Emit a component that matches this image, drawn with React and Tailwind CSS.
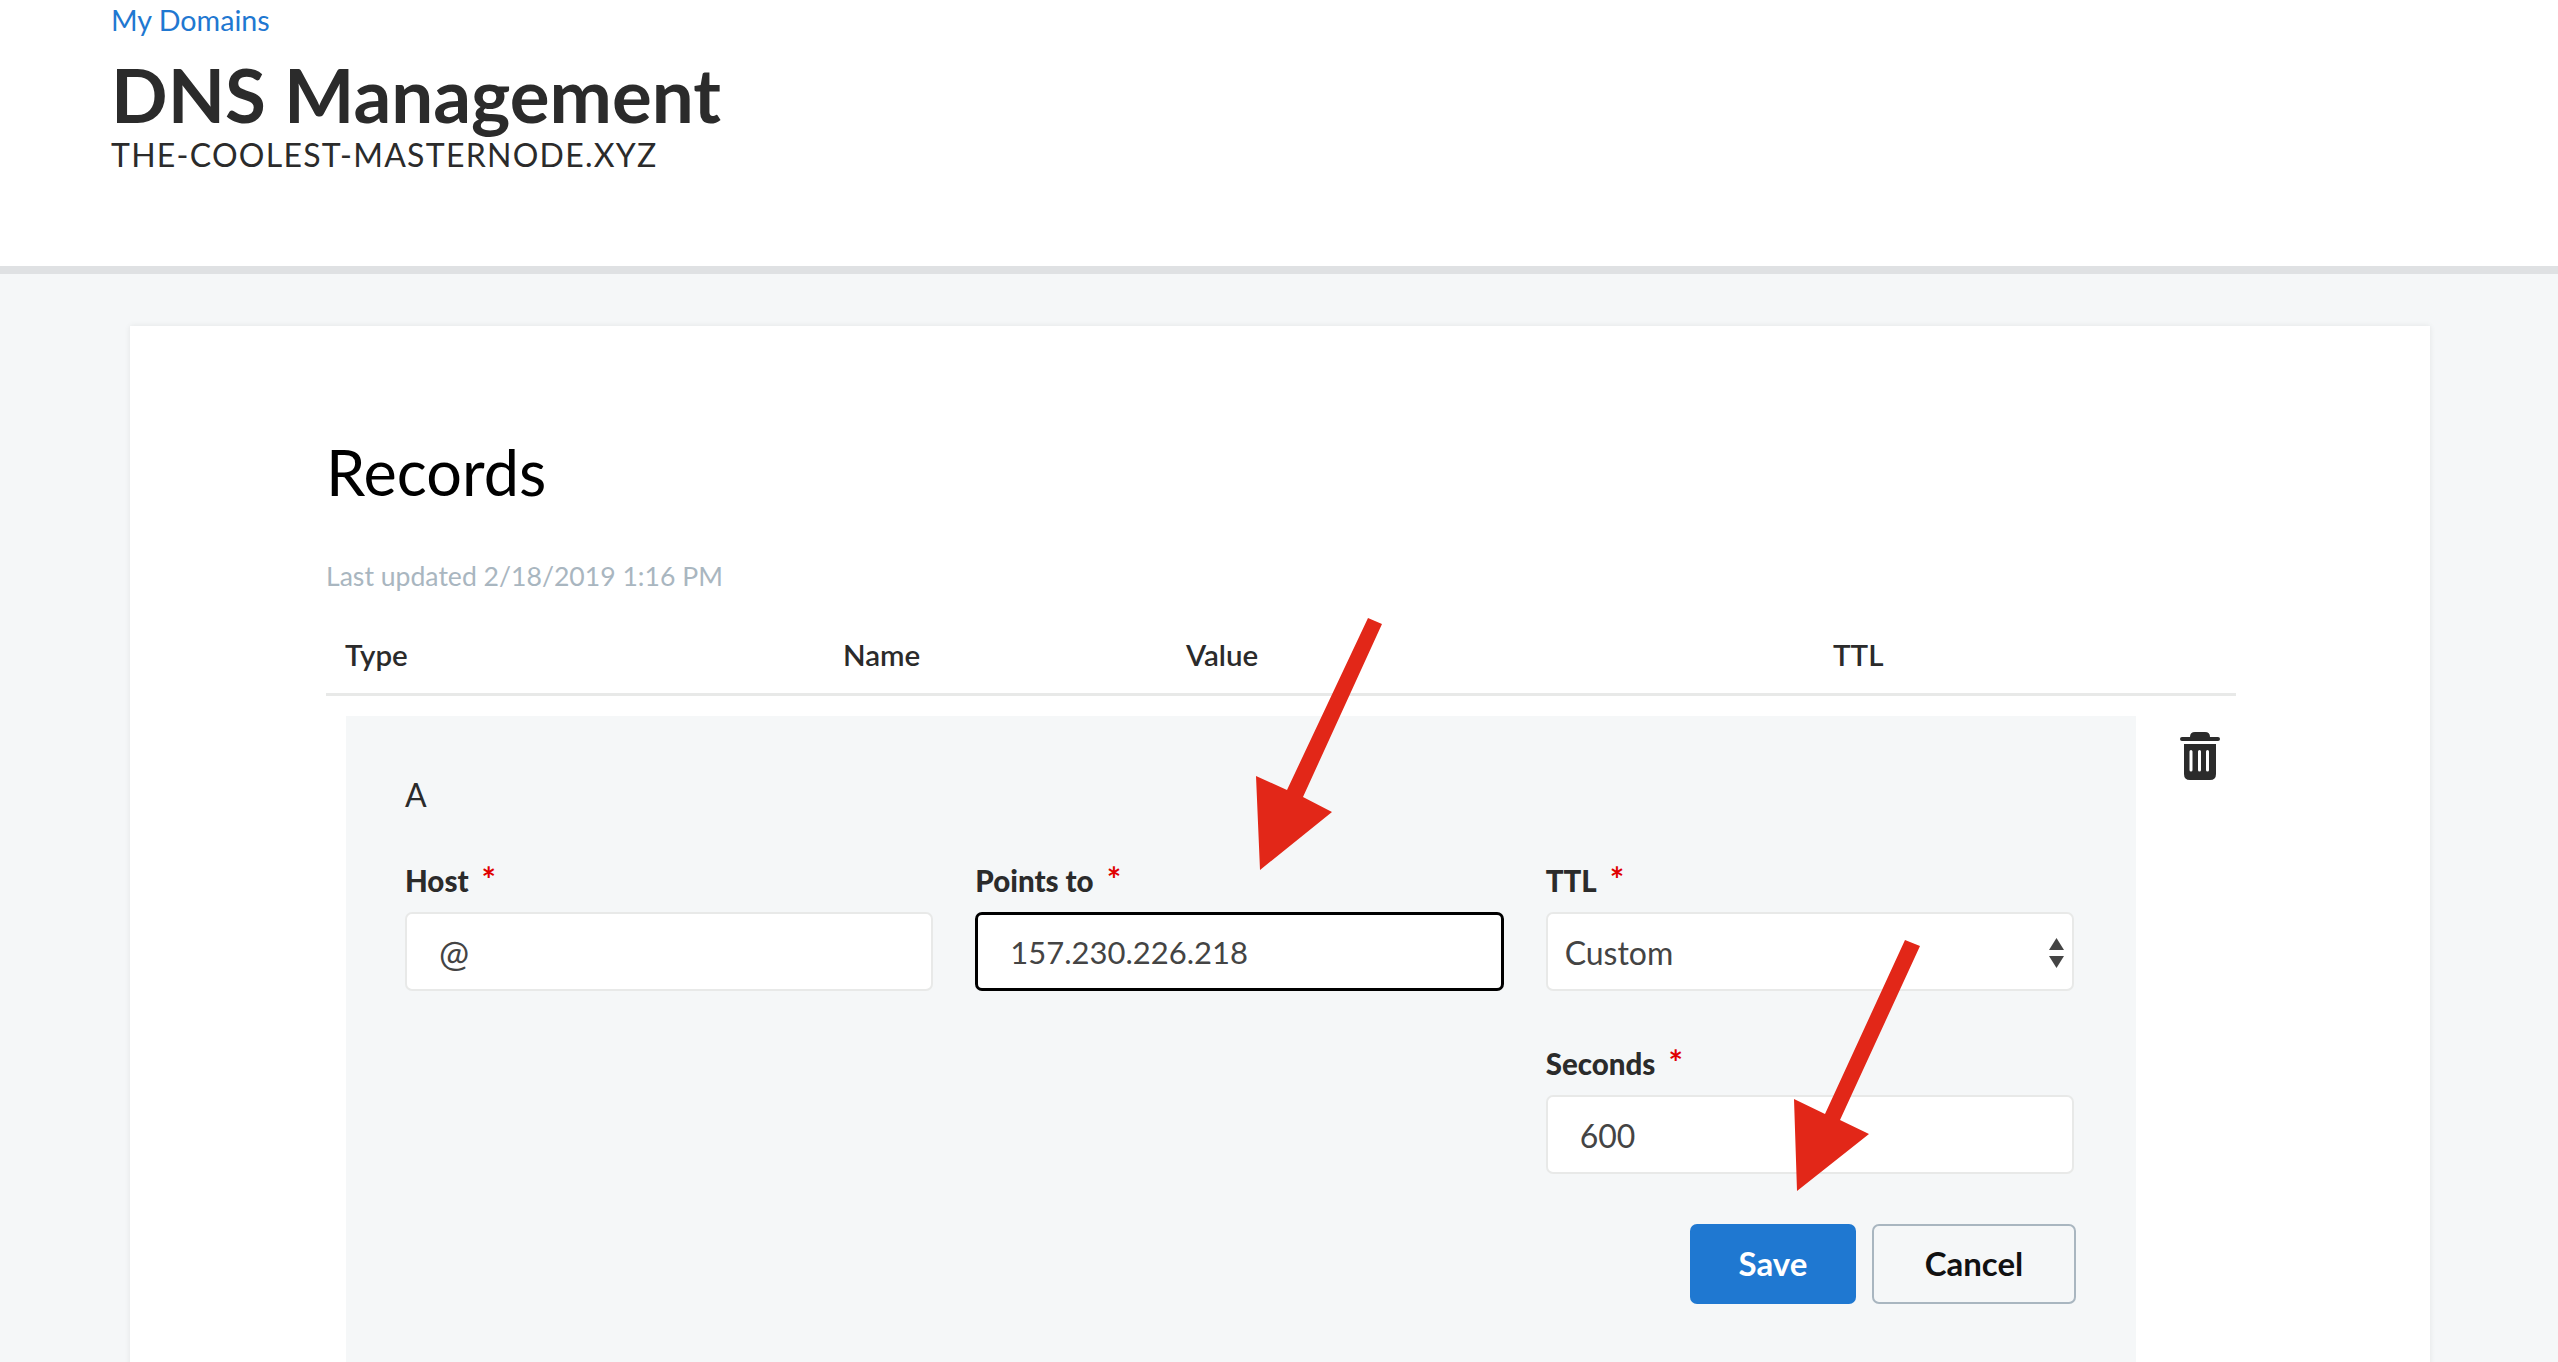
import React from "react";

const inputBox = "flex h-[79px] items-center rounded-[7px] border-2 border-[#e8e9e8] bg-white pt-[2px] text-[32px] text-[#444444]";

function Field({ label, children }) {
  return (
    <div>
      <div className="flex h-[40px] items-center text-[29.500px] font-black leading-none text-[#2b2b2b]">
        {label}
        <span className="ml-[13px] -mt-[4px] text-[34px] font-bold text-[#e00000]">*</span>
      </div>
      <div className="mt-[11px]">{children}</div>
    </div>
  );
}

function TrashIcon() {
  return (
    <svg width="40" height="48" viewBox="0 0 40 48" fill="#2b2b2b">
      <path d="M10 5 Q10 0 15 0 H25 Q30 0 30 5 H38 a2 2 0 0 1 0 4 H2 a2 2 0 0 1 0 -4 Z" />
      <path fillRule="evenodd" d="M4 12 H36 V42 Q36 48 30 48 H10 Q4 48 4 42 Z M11 18 a1.5 1.5 0 0 0 -1.5 1.500 V38 a1.500 1.500 0 0 0 3 0 V19.500 a1.500 1.500 0 0 0 -1.500 -1.500 Z M19.500 18 a1.500 1.500 0 0 0 -1.500 1.500 V38 a1.500 1.500 0 0 0 3 0 V19.500 a1.500 1.500 0 0 0 -1.500 -1.500 Z M27.500 18 a1.500 1.500 0 0 0 -1.500 1.500 V38 a1.500 1.500 0 0 0 3 0 V19.500 a1.500 1.500 0 0 0 -1.500 -1.500 Z" />
    </svg>
  );
}

function SelectCaret() {
  return (
    <svg width="15" height="30" viewBox="0 0 15 30" fill="#444444">
      <path d="M7.500 0 L15 12 H0 Z" />
      <path d="M0 18 H15 L7.500 30 Z" />
    </svg>
  );
}

export default function App() {
  return (
    <div className="relative h-[1362px] overflow-hidden bg-[#f5f7f8] font-['Lato',sans-serif]">
      {/* Page header */}
      <header className="h-[274px] border-b-8 border-[#dfe1e3] bg-white pl-[111px]">
        <a className="block pt-[3px] text-[28.700px] leading-[34px] text-[#1f78d1]">My Domains</a>
        <h1 className="mt-[20px] text-[74.500px] font-bold leading-[74px] text-[#2b2b2b]">DNS Management</h1>
        <div className="mt-[6px] text-[32px] leading-[36px] tracking-[1.270px] text-[#2b2b2b]">THE-COOLEST-MASTERNODE.XYZ</div>
      </header>

      {/* Records card */}
      <main className="ml-[130px] mr-[128px] mt-[52px] h-[1100px] bg-white pl-[196px] pr-[194px] pt-[110px] shadow-[0_0_6px_rgba(0,0,0,0.08)]">
        <h2 className="text-[63px] leading-[72px] text-black">Records</h2>
        <p className="mt-[51px] text-[26.600px] leading-[34px] text-[#a9b6c0]">Last updated 2/18/2019 1:16 PM</p>

        <div className="mt-[28px] grid h-[75px] grid-cols-[498px_343px_647px_1fr] items-center border-b-[3px] border-[#e8e9e8] pb-[3px] pl-[19px] text-[29.500px] font-semibold text-[#2b2b2b]">
          <span>Type</span>
          <span>Name</span>
          <span>Value</span>
          <span>TTL</span>
        </div>

        <div className="ml-[20px] mt-[20px] flex items-start">
          <section className="h-[700px] w-[1790px] bg-[#f5f7f8] pl-[59px] pr-[62px] pt-[60px]">
            <div className="text-[32px] leading-[38px] text-[#2b2b2b]">A</div>
            <div className="mt-[47px] grid grid-cols-3 gap-x-[42px]">
              <Field label="Host">
                <div className={`${inputBox} pl-[32px]`}><span className="text-[36px]">@</span></div>
              </Field>
              <Field label="Points to">
                <div className="flex h-[79px] items-center rounded-[7px] border-[3px] border-black bg-white pl-[32px] pt-[2px] text-[31px] text-[#444444]">157.230.226.218</div>
              </Field>
              <div>
                <Field label="TTL">
                  <div className={`${inputBox} justify-between pl-[17px] pr-[8px]`}>
                    Custom
                    <SelectCaret />
                  </div>
                </Field>
                <div className="mt-[53px]">
                  <Field label="Seconds">
                    <div className={`${inputBox} pl-[32px]`}>600</div>
                  </Field>
                </div>
                <div className="mt-[50px] flex justify-end gap-[16px]">
                  <button className="h-[80px] w-[166px] rounded-[7px] bg-[#1f78d1] text-[33px] font-bold text-white">Save</button>
                  <button className="-mr-[2px] h-[80px] w-[204px] rounded-[7px] border-2 border-[#a9b6c0] text-[33px] font-bold text-[#111111]">Cancel</button>
                </div>
              </div>
            </div>
          </section>
          <div className="ml-[44px] mt-[16px]">
            <TrashIcon />
          </div>
        </div>
      </main>

      {/* Annotation arrows drawn over the page */}
      <svg className="absolute left-0 top-0" width="2558" height="1362" fill="#e22718">
        <polygon points="1368,618 1382,624 1303,797 1332,812 1260,870 1256,776 1287,790" />
        <polygon points="1905,940 1920,946 1840,1120 1869,1134 1797,1191 1794,1099 1825,1114" />
      </svg>
    </div>
  );
}
